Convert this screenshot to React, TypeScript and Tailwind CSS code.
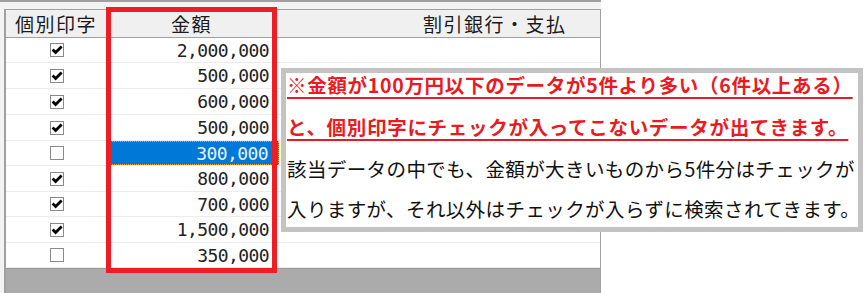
import { FC } from 'react';

type Row = { checked: boolean; amount: string; h: string; selected?: boolean };

const rows: Row[] = [
  { checked: true, amount: '2,000,000', h: 'h-[25px]' },
  { checked: true, amount: '500,000', h: 'h-[26px]' },
  { checked: true, amount: '600,000', h: 'h-[26px]' },
  { checked: true, amount: '500,000', h: 'h-[26px]' },
  { checked: false, amount: '300,000', h: 'h-[25px]', selected: true },
  { checked: true, amount: '800,000', h: 'h-[26px]' },
  { checked: true, amount: '700,000', h: 'h-[25px]' },
  { checked: true, amount: '1,500,000', h: 'h-[26px]' },
  { checked: false, amount: '350,000', h: 'h-[25px]' }
];

const CheckBox: FC<{ checked: boolean }> = ({ checked }) => (
  <div className="w-[14px] h-[14px] border border-[#8a8a8a] bg-white flex items-center justify-center">
    {checked && (
      <svg width="12" height="12" viewBox="0 0 12 12">
        <path d="M1.6 5.6 L4.6 8.6 L10.6 2.6" fill="none" stroke="#000" strokeWidth="2.8" strokeLinecap="butt" />
      </svg>
    )}
  </div>
);

const App: FC = () => {
  return (
    <div className="relative w-[868px] h-[293px] bg-white overflow-hidden" style={{ fontFamily: '"Noto Sans CJK JP", sans-serif' }}>
      {/* grid window */}
      <div className="w-[601px] h-full bg-[#f3f3f3] border-t-2 border-[#a0a0a0] pt-[7px] pl-[4px] flex flex-col">
        <div className="flex-1 flex flex-col border-l-2 border-t border-r border-[#a0a0a0]">
          {/* header */}
          <div className="flex h-[28px] bg-[#f0f0f0] border-b border-[#a0a0a0] text-[19px] text-[#1a1a1a] leading-none">
            <div className="w-[101px] flex items-center justify-center border-r border-[#c8c8c8] tracking-[1.5px]">個別印字</div>
            <div className="w-[170px] flex items-center justify-center border-r border-[#c8c8c8] tracking-[1.5px]">金額</div>
            <div className="flex-1 flex items-center pl-[146px] tracking-[1.5px]">割引銀行・支払</div>
          </div>
          {/* rows */}
          {rows.map((r, i) => (
            <div key={i} className={`flex ${r.h} bg-white border-b border-[#ececec]`}>
              <div className="w-[101px] flex items-center justify-center">
                <CheckBox checked={r.checked} />
              </div>
              <div
                className={`w-[172px] flex items-center justify-end pr-[10px] text-[18px] tracking-[-0.6px] ${
                  r.selected ? 'bg-[#0078d7] text-[#e8f2fc] border border-dotted border-[#f0a040]' : 'text-[#222]'
                }`}
                style={{ fontFamily: '"DejaVu Sans Mono", monospace' }}
              >
                {r.amount}
              </div>
              <div className="flex-1" />
            </div>
          ))}
          <div className="flex-1 bg-[#ababab] border-t border-[#9a9a9a]" />
        </div>
      </div>

      {/* red highlight frame */}
      <div className="absolute left-[106px] top-[7px] w-[171px] h-[266px] border-[5px] border-[#ee1c24]" />

      {/* callout */}
      <div className="absolute left-[281px] top-[68px] w-[582px] h-[164px] border-[5px] border-[#c3c3c3] bg-white pl-[1px] overflow-hidden whitespace-nowrap">
        <div className="-mt-[8px]">
          <div className="text-[19.5px] font-bold text-[#ea1a22] leading-none tracking-[0.7px]">
            <div className="h-[40px] flex items-center">
              <span className="underline decoration-2 underline-offset-[4px]">※金額が100万円以下のデータが5件より多い（6件以上ある）</span>
            </div>
            <div className="h-[43px] flex items-center">
              <span className="underline decoration-2 underline-offset-[4px]">と、個別印字にチェックが入ってこないデータが出てきます。</span>
            </div>
          </div>
          <div className="text-[19.5px] text-[#111] leading-none tracking-[0.4px]">
            <div className="h-[41px] flex items-center">該当データの中でも、金額が大きいものから5件分はチェックが</div>
            <div className="h-[40px] flex items-center">入りますが、それ以外はチェックが入らずに検索されてきます。</div>
          </div>
        </div>
      </div>
    </div>
  );
};

export default App;
